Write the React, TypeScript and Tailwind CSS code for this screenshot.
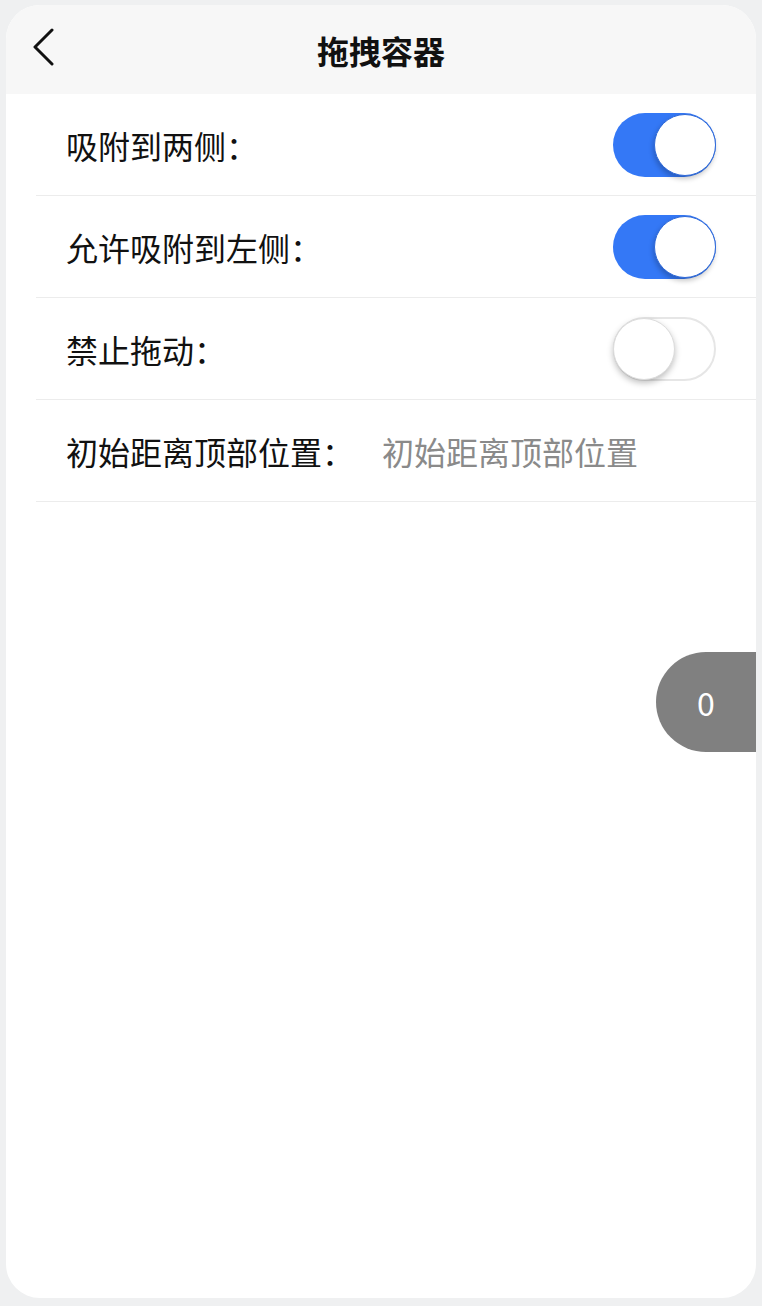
import React from "react";

const font = { fontFamily: '"Noto Sans CJK SC", "Noto Sans", sans-serif' };

function Toggle({ on }: { on: boolean }) {
  return (
    <div
      className={
        on
          ? "relative h-[64px] w-[103px] rounded-full bg-[#3478f6]"
          : "relative h-[64px] w-[103px] rounded-full border-2 border-[#e6e6e6] bg-white"
      }
    >
      <div
        className={
          on
            ? "absolute right-0 top-[1px] h-[62px] w-[62px] rounded-full bg-white border border-[#2d68d8] shadow-[-1px_3px_5px_rgba(0,0,0,0.22)]"
            : "absolute -left-[2px] -top-[1px] h-[62px] w-[62px] rounded-full bg-white border border-[#dcdcdc] shadow-[0_3px_6px_rgba(0,0,0,0.25)]"
        }
      />
    </div>
  );
}

function Row({ label, children }: { label: string; children?: React.ReactNode }) {
  return (
    <div className="ml-[30px] flex h-[102px] items-center border-b border-[#ececec] pl-[30px] pr-[40px]">
      <span className="text-[32px] leading-none text-[#111]">{label}</span>
      <div className="ml-auto flex items-center">{children}</div>
    </div>
  );
}

export default function App() {
  return (
    <div className="h-[1306px] w-full bg-[#eff0f1] px-[6px] pb-[8px] pt-[5px]" style={font}>
      <div className="relative flex h-full flex-col overflow-hidden rounded-[34px] bg-white">
        {/* header */}
        <div className="relative flex h-[89px] shrink-0 items-center justify-center bg-[#f7f7f7]">
          <svg
            className="absolute left-[27px] top-[23px]"
            width="24"
            height="40"
            viewBox="0 0 24 40"
            fill="none"
            stroke="#111"
            strokeWidth="3"
            strokeLinecap="round"
            strokeLinejoin="round"
          >
            <path d="M19 2 L2 19 L19 36" />
          </svg>
          <span className="text-[32px] font-bold leading-none text-[#111]">拖拽容器</span>
        </div>

        <Row label="吸附到两侧：">
          <Toggle on />
        </Row>
        <Row label="允许吸附到左侧：">
          <Toggle on />
        </Row>
        <Row label="禁止拖动：">
          <Toggle on={false} />
        </Row>
        <div className="ml-[30px] flex h-[102px] items-center border-b border-[#ececec] pl-[30px] pr-[40px]">
          <span className="text-[32px] leading-none text-[#111]">初始距离顶部位置：</span>
          <input
            className="ml-[28px] w-[300px] bg-transparent text-[32px] leading-none text-[#333] outline-none placeholder:text-[#8a8a8a]"
            placeholder="初始距离顶部位置"
            style={font}
          />
        </div>

        {/* floating drag button */}
        <div className="absolute right-0 top-[647px] flex h-[100px] w-[100px] items-center justify-center rounded-l-full bg-[#808080]">
          <span className="text-[32px] leading-none text-white">0</span>
        </div>
      </div>
    </div>
  );
}
